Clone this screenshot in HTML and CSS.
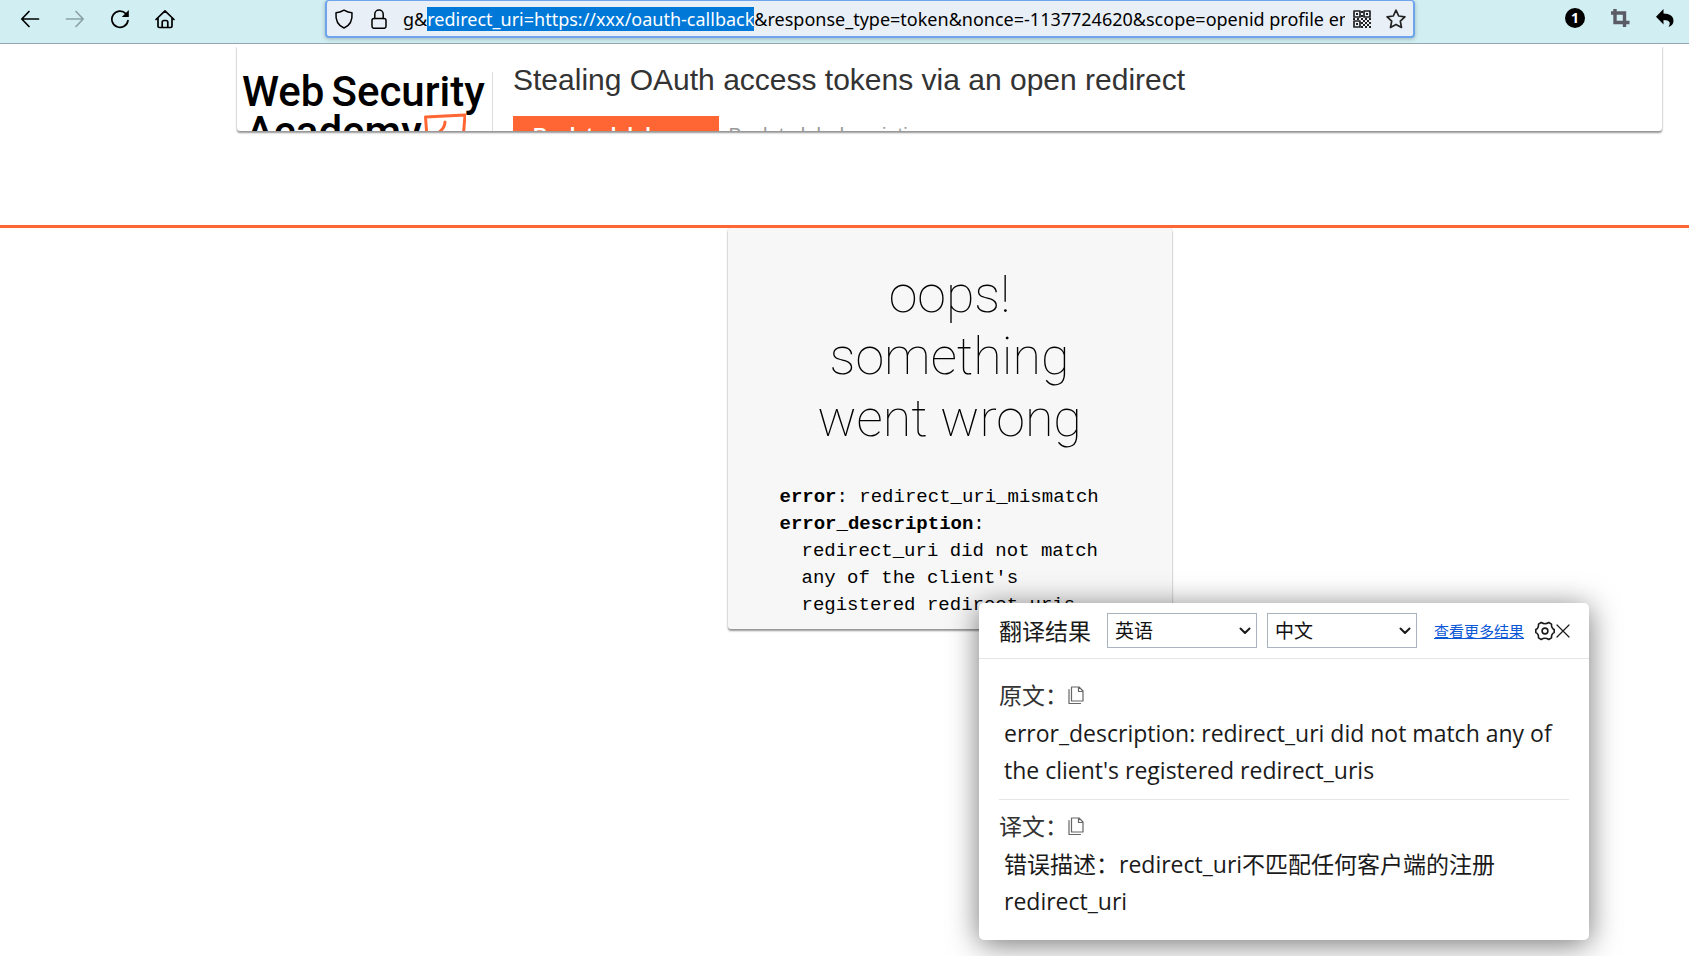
FILE: index.html
```html
<!DOCTYPE html>
<html lang="en">
<head>
<meta charset="utf-8">
<title>Stealing OAuth access tokens via an open redirect</title>
<link rel="stylesheet" href="styles.css">
</head>
<body>
<header class="toolbar">
  <nav class="nav-buttons" aria-label="Browser navigation">
    <button class="icon-button" type="button" aria-label="Back"><svg viewBox="0 0 20 20"><path d="M18.500 10H2M9 2.500 1.800 10 9 17.500"/></svg></button>
    <button class="icon-button dim" type="button" aria-label="Forward"><svg viewBox="0 0 20 20"><path d="M1.500 10H18M11 2.500 18.200 10 11 17.500"/></svg></button>
    <button class="icon-button" type="button" aria-label="Reload"><svg viewBox="0 0 20 20"><path d="M18 11.500A8.100 8.100 0 1 1 15.800 4.600"/><path class="solid" d="M18.800 1v7h-7z"/></svg></button>
    <button class="icon-button" type="button" aria-label="Home"><svg viewBox="0 0 20 20"><path d="M1 10.500 10 1.800l9 8.700M3 9v8.200q0 1.300 1.300 1.300h11.400q1.300 0 1.300-1.300V9M7.200 18.500v-5.200q0-1.800 1.800-1.800h2q1.800 0 1.800 1.800v5.200"/></svg></button>
  </nav>
  <div class="urlbar">
    <svg class="url-icon" viewBox="0 0 20 20"><path d="M10 1.200q4 2.500 8 2.500C18.600 11 16 16.500 10 19 4 16.500 1.400 11 2 3.700q4 0 8-2.500z"/></svg>
    <svg class="url-icon" viewBox="0 0 20 20"><rect x="3" y="9.500" width="14" height="9.800" rx="2"/><path d="M5.800 9.500V5.200a4.200 4.200 0 0 1 8.400 0v4.300"/></svg>
    <input class="url-input" id="url" type="text" aria-label="Address" spellcheck="false" value="g&amp;redirect_uri=https://xxx/oauth-callback&amp;response_type=token&amp;nonce=-1137724620&amp;scope=openid profile email">
    <button class="url-button" type="button" aria-label="QR code"><svg viewBox="0 0 18 18"><path d="M1 1h6v6H1zM11 1h6v6h-6zM1 11h6v6H1z"/><path class="solid" d="M3 3h2v2H3zM13 3h2v2h-2zM3 13h2v2H3zM8 1h2v2H8zM8 5h2v2H8zM0 8h2v2H0zM4 8h2v2H4zM8 8h2v2H8zM12 8h2v2h-2zM16 8h2v2h-2zM10 10h2v2h-2zM14 10h2v2h-2zM8 12h2v2H8zM12 12h2v2h-2zM16 12h2v2h-2zM10 14h2v2h-2zM14 14h2v2h-2zM8 16h2v2H8zM12 16h2v2h-2zM16 16h2v2h-2z"/></svg></button>
    <button class="url-button" type="button" aria-label="Bookmark"><svg viewBox="0 0 20 20"><path d="m10 1.200 2.700 5.800 6.200.800-4.600 4.300 1.200 6.400L10 15.400l-5.500 3.100 1.200-6.400L1.100 7.800 7.300 7z"/></svg></button>
  </div>
  <div class="extensions">
    <button class="icon-button badge" type="button">1</button>
    <button class="icon-button crop" type="button" aria-label="Crop"><svg viewBox="0 0 20 20"><path d="M5 1v13.500h14.500M1 5h13.500v14"/></svg></button>
    <button class="icon-button" type="button" aria-label="Undo"><svg viewBox="0 0 20 20"><path class="solid" d="M8.500 1v4.500c6.500 0 10 2.800 10 7.500 0 2.800-2 5-5 6 2.500-3.800 1.500-7-5-7v4.500L1 8.800z"/></svg></button>
  </div>
</header>

<section class="lab-banner">
  <div class="lab-card">
    <a class="logo" href="#" aria-label="Web Security Academy">
      <span class="logo-line"><span>Web</span><span>Security</span></span>
      <span class="logo-line second"><span>Academy</span><svg class="logo-mark" viewBox="0 0 42 42"><path d="M1.500 5 41 3l-3 37-34-1z"/><path d="M21 10q0 6-7 11l12 2-10 12"/></svg></span>
    </a>
    <div class="lab-info">
      <h2 class="lab-title">Stealing OAuth access tokens via an open redirect</h2>
      <div class="lab-links">
        <a class="home-link" href="#">Back to lab home</a>
        <a class="desc-link" href="#">Back to lab description »</a>
      </div>
    </div>
  </div>
</section>

<main class="content">
  <article class="error-card">
    <h1 class="error-title">oops! something went wrong</h1>
    <div class="error-list">
      <p><strong>error</strong>: redirect_uri_mismatch</p>
      <p><strong>error_description</strong>: redirect_uri did not match any of the client's registered redirect_uris</p>
    </div>
  </article>
</main>

<aside class="translator" lang="zh-CN">
  <header class="translator-head">
    <h3 class="translator-title">翻译结果</h3>
    <div class="picker">
      <select aria-label="源语言"><option>英语</option><option>中文</option></select>
      <svg viewBox="0 0 12 8"><path d="m1.500 1.500 4.500 4.500 4.500-4.500"/></svg>
    </div>
    <div class="picker">
      <select aria-label="目标语言"><option>中文</option><option>英语</option></select>
      <svg viewBox="0 0 12 8"><path d="m1.500 1.500 4.500 4.500 4.500-4.500"/></svg>
    </div>
    <a class="more-link" href="#">查看更多结果</a>
    <div class="head-actions">
      <button class="plain-button" type="button" aria-label="设置"><svg viewBox="0 0 20 20"><path d="M6.200 1.500Q8 2.800 10 2.800t3.800-1.300l2.700 1.600q-.2 2 .6 3.500t2.100 2v2.800q-1.300.5-2.100 2t-.6 3.500l-2.700 1.600Q12 17.200 10 17.200t-3.800 1.300l-2.700-1.600q.2-2-.6-3.500t-2.100-2V8.600q1.300-.5 2.100-2t.6-3.500z"/><circle cx="10" cy="10" r="2.900"/></svg></button>
      <button class="plain-button close" type="button" aria-label="关闭"><svg viewBox="0 0 16 16"><path d="m2 2 12 12M14 2 2 14"/></svg></button>
    </div>
  </header>
  <div class="translator-body">
    <section class="passage">
      <h4 class="passage-label">原文：<button class="plain-button copy" type="button" aria-label="复制原文"><svg viewBox="0 0 16 18"><path d="M3.500 1h7.500l4 4v10H3.500zM10.500 1v4.500H15M1 3.500v14h11.500"/></svg></button></h4>
      <p class="passage-text" lang="en">error_description: redirect_uri did not match any of the client's registered redirect_uris</p>
    </section>
    <section class="passage">
      <h4 class="passage-label">译文：<button class="plain-button copy" type="button" aria-label="复制译文"><svg viewBox="0 0 16 18"><path d="M3.500 1h7.500l4 4v10H3.500zM10.500 1v4.500H15M1 3.500v14h11.500"/></svg></button></h4>
      <p class="passage-text">错误描述：redirect_uri不匹配任何客户端的注册redirect_uri</p>
    </section>
  </div>
</aside>
<script src="script.js"></script>
</body>
</html>
```
FILE: script.js
```js
const url = document.getElementById("url");
const picked = "redirect_uri=https://xxx/oauth-callback";
const start = url.value.indexOf(picked);
url.focus({ preventScroll: true });
url.setSelectionRange(start, start + picked.length);
url.scrollLeft = 0;
```
FILE: styles.css
```css
* {
  box-sizing: border-box;
}

body {
  margin: 0;
  background: #fff;
  color: #000;
  font-family: "Liberation Sans", sans-serif;
  position: relative;
  min-height: 100vh;
  overflow: hidden;
}

h1, h2, h3, h4, p {
  margin: 0;
  font-weight: 400;
}

button {
  border: 0;
  padding: 0;
  background: none;
  color: inherit;
}

svg {
  display: block;
  fill: none;
  stroke: currentColor;
  stroke-width: 1.7;
  stroke-linejoin: round;
  stroke-linecap: round;
}

.solid {
  fill: currentColor;
  stroke: none;
}

/* Browser toolbar */

.toolbar {
  display: flex;
  align-items: flex-start;
  height: 44px;
  background: #d1eff3;
  border-bottom: 1px solid #93a9ae;
}

.nav-buttons {
  display: flex;
  gap: 25px;
  width: 325px;
  padding: 9px 0 0 20px;
}

.icon-button {
  width: 20px;
  height: 20px;
}

.dim {
  color: #8ca1a5;
}

.urlbar {
  flex: 1;
  min-width: 0;
  display: flex;
  align-items: center;
  height: 38px;
  padding: 0 7px;
  background: #e9eff6;
  border: 2px solid #6ea4ec;
  border-top-width: 1px;
  border-radius: 4px;
  box-shadow: 0 1px 4px rgba(0, 0, 0, 0.25);
}

.url-icon {
  width: 20px;
  height: 20px;
  margin-right: 15px;
  flex: none;
  stroke-width: 1.5;
}

.url-input {
  flex: 1;
  min-width: 0;
  height: 24px;
  margin: 0 8px 0 -1px;
  padding: 0;
  border: 0;
  outline: 0;
  background: none;
  color: #000;
  font-family: "Noto Sans", sans-serif;
  font-size: 18px;
}

.url-input::selection {
  background: #0078d7;
  color: #fff;
}

.url-button {
  flex: none;
  width: 18px;
  height: 18px;
  margin-right: 15px;
  color: #222;
}

.url-button + .url-button {
  width: 20px;
  height: 20px;
  margin-right: 0;
}

.extensions {
  display: flex;
  gap: 25px;
  justify-content: flex-end;
  width: 274px;
  padding: 8px 14px 0 0;
}

.badge {
  border-radius: 50%;
  background: #000;
  color: #fff;
  font: 700 14px/20px "Noto Sans", sans-serif;
}

.crop {
  color: #5b5b66;
}

.crop svg {
  stroke-width: 3.4;
  stroke-linejoin: miter;
  stroke-linecap: butt;
}

/* Lab banner */

.lab-banner {
  padding: 0 27px 94px 237px;
  border-bottom: 3px solid #f63;
}

.lab-card {
  display: flex;
  height: 87px;
  overflow: hidden;
  border-radius: 3px;
  box-shadow: 0 2px 2px rgba(0, 0, 0, 0.4), 0 0 2px rgba(0, 0, 0, 0.15);
  clip-path: inset(3px -4px -6px -4px);
}

.logo {
  flex: none;
  width: 256px;
  margin-top: 28px;
  padding-left: 5px;
  border-right: 1px solid #ddd;
  color: #000;
  text-decoration: none;
  font: 500 42px/40px Roboto, sans-serif;
}

.logo-line {
  display: flex;
  gap: 7px;
}

.second {
  gap: 2px;
  padding-left: 4px;
}

.logo-mark {
  width: 42px;
  height: 42px;
  color: #f63;
  stroke-width: 3;
}

.lab-info {
  padding: 18px 0 0 20px;
}

.lab-title {
  color: #333;
  font-size: 30px;
  line-height: 36px;
}

.lab-links {
  display: flex;
  gap: 10px;
  padding-top: 18px;
  font-size: 20px;
  line-height: 38px;
}

.lab-links a {
  text-decoration: none;
  white-space: nowrap;
}

.home-link {
  padding: 0 20px;
  background: #f63;
  color: #fff;
  font-weight: 700;
}

.desc-link {
  color: #999;
}

/* Error card */

.content {
  padding-left: 210px;
}

.error-card {
  width: 444px;
  margin: 0 auto;
  padding: 36px 52px 10px;
  background: #f7f7f7;
  border-radius: 3px;
  box-shadow: 0 2px 2px rgba(0, 0, 0, 0.4), 0 0 2px rgba(0, 0, 0, 0.15);
  clip-path: inset(0 -4px -6px -4px);
}

.error-title {
  padding: 0 24px;
  text-align: center;
  font: 100 52px/62px Roboto, sans-serif;
}

.error-list {
  padding-top: 34px;
  font: 19px/27px "Liberation Mono", monospace;
}

.error-list p {
  padding-left: 22px;
  text-indent: -22px;
}

/* Translation popup */

.translator {
  position: absolute;
  top: 603px;
  right: 100px;
  width: 610px;
  background: #fff;
  border-radius: 5px;
  box-shadow: 0 4px 30px rgba(0, 0, 0, 0.55);
  color: #1a1a1a;
  font-family: "Open Sans", "Noto Sans CJK SC", sans-serif;
}

.translator-head {
  display: flex;
  align-items: center;
  gap: 10px;
  height: 56px;
  padding: 0 18px 0 20px;
  border-bottom: 1px solid #e6e6e6;
}

.translator-title {
  margin-right: 6px;
  font-size: 23px;
  line-height: 36px;
}

.picker {
  display: grid;
  align-items: center;
  width: 150px;
}

.picker select {
  grid-area: 1 / 1;
  appearance: none;
  width: 100%;
  height: 35px;
  padding: 0 7px;
  border: 1px solid #aab4bf;
  border-radius: 0;
  background: #fff;
  color: #111;
  font-family: inherit;
  font-size: 19px;
}

.picker svg {
  grid-area: 1 / 1;
  justify-self: end;
  width: 12px;
  height: 8px;
  margin-right: 6px;
  pointer-events: none;
  stroke-width: 2;
}

.more-link {
  margin-left: 7px;
  color: #0a57d6;
  font-size: 15px;
  line-height: 20px;
}

.head-actions {
  display: flex;
  align-items: center;
  margin-left: auto;
}

.plain-button {
  width: 20px;
  height: 20px;
}

.plain-button svg {
  stroke-width: 1.6;
}

.close {
  width: 16px;
  height: 16px;
}

.close svg {
  stroke-width: 1.2;
}

.translator-body {
  padding: 18px 20px 20px;
}

.passage + .passage {
  margin-top: 10px;
  padding-top: 8px;
  border-top: 1px solid #e6e6e6;
}

.passage-label {
  display: flex;
  align-items: center;
  padding-bottom: 2px;
  color: #333;
  font-size: 23px;
  line-height: 36px;
}

.copy {
  width: 16px;
  height: 18px;
  color: #666;
}

.copy svg {
  stroke-width: 1.2;
}

.passage-text {
  padding: 0 5px;
  font-size: 23px;
  line-height: 37px;
}
```
